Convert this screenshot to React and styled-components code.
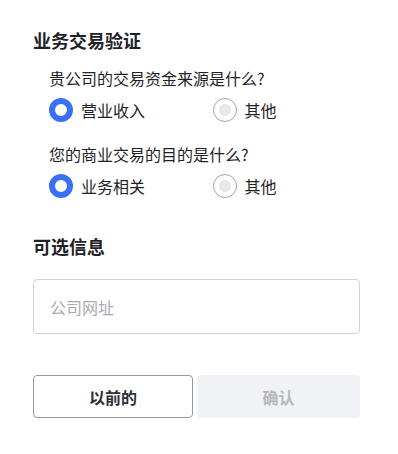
import React, { useState } from "react";
import styled, { createGlobalStyle } from "styled-components";

const Global = createGlobalStyle`
  html, body { margin: 0; padding: 0; background: #fff; }
  body { font-family: "Noto Sans CJK SC", "Noto Sans", sans-serif; color: #1f2329; }
  * { box-sizing: border-box; }
`;

const Page = styled.div`
  width: 327px;
  margin-left: 33px;
  padding-top: 28px;
  display: flex;
  flex-direction: column;
`;

const SectionTitle = styled.h2`
  margin: 0;
  font-size: 18px;
  line-height: 24px;
  font-weight: 700;
  color: #1f2329;
  margin-top: ${(p) => p.$mt || 0}px;
`;

const Group = styled.div`
  display: flex;
  flex-direction: column;
  gap: 8px;
  margin-top: ${(p) => p.$mt || 0}px;
`;

const Question = styled.div`
  padding-left: 16px;
  font-size: 16px;
  line-height: 24px;
  color: #1f2329;
`;

const Options = styled.div`
  display: grid;
  grid-template-columns: 1fr 1fr;
`;

const Option = styled.label`
  display: flex;
  align-items: center;
  gap: 8px;
  padding-left: 16px;
  height: 24px;
  font-size: 16px;
  line-height: 24px;
  color: #1f2329;
  cursor: pointer;
`;

const Dot = styled.span`
  width: 24px;
  height: 24px;
  border-radius: 50%;
  flex: none;
  display: flex;
  align-items: center;
  justify-content: center;
  background: ${(p) => (p.$on ? "#fff" : "#e6e8ec")};
  border: ${(p) => (p.$on ? "6px solid #3a6ff7" : "1px solid #a3a9b3")};
  box-shadow: ${(p) => (p.$on ? "none" : "inset 0 0 0 5px #fff")};
`;

const Input = styled.input`
  margin-top: 21px;
  width: 327px;
  height: 55px;
  border: 1px solid #cfd2d6;
  border-radius: 4px;
  padding: 0 16px;
  font-family: inherit;
  font-size: 16px;
  color: #1f2329;
  outline: none;
  &::placeholder { color: #a8abb0; }
`;

const Buttons = styled.div`
  margin-top: 41px;
  display: grid;
  grid-template-columns: 160px 1fr;
  gap: 4px;
`;

const Button = styled.button`
  height: 43px;
  border-radius: 4px;
  font-family: inherit;
  font-size: 16px;
  font-weight: 700;
  border: ${(p) => (p.$disabled ? "none" : "1px solid #8e99a6")};
  background: ${(p) => (p.$disabled ? "#f0f2f5" : "#fff")};
  color: ${(p) => (p.$disabled ? "#b3b8bf" : "#2b2f36")};
  cursor: ${(p) => (p.$disabled ? "default" : "pointer")};
`;

function RadioQuestion({ question, options, value, onChange }) {
  return (
    <>
      <Question>{question}</Question>
      <Options>
        {options.map((o, i) => (
          <Option key={o} onClick={() => onChange(i)}>
            <Dot $on={value === i} />
            {o}
          </Option>
        ))}
      </Options>
    </>
  );
}

export default function App() {
  const [a, setA] = useState(0);
  const [b, setB] = useState(0);
  return (
    <>
      <Global />
      <Page>
        <SectionTitle>业务交易验证</SectionTitle>
        <Group $mt={14}>
          <RadioQuestion
            question="贵公司的交易资金来源是什么?"
            options={["营业收入", "其他"]}
            value={a}
            onChange={setA}
          />
        </Group>
        <Group $mt={20}>
          <RadioQuestion
            question="您的商业交易的目的是什么?"
            options={["业务相关", "其他"]}
            value={b}
            onChange={setB}
          />
        </Group>
        <SectionTitle $mt={36}>可选信息</SectionTitle>
        <Input placeholder="公司网址" />
        <Buttons>
          <Button>以前的</Button>
          <Button $disabled disabled>确认</Button>
        </Buttons>
      </Page>
    </>
  );
}
